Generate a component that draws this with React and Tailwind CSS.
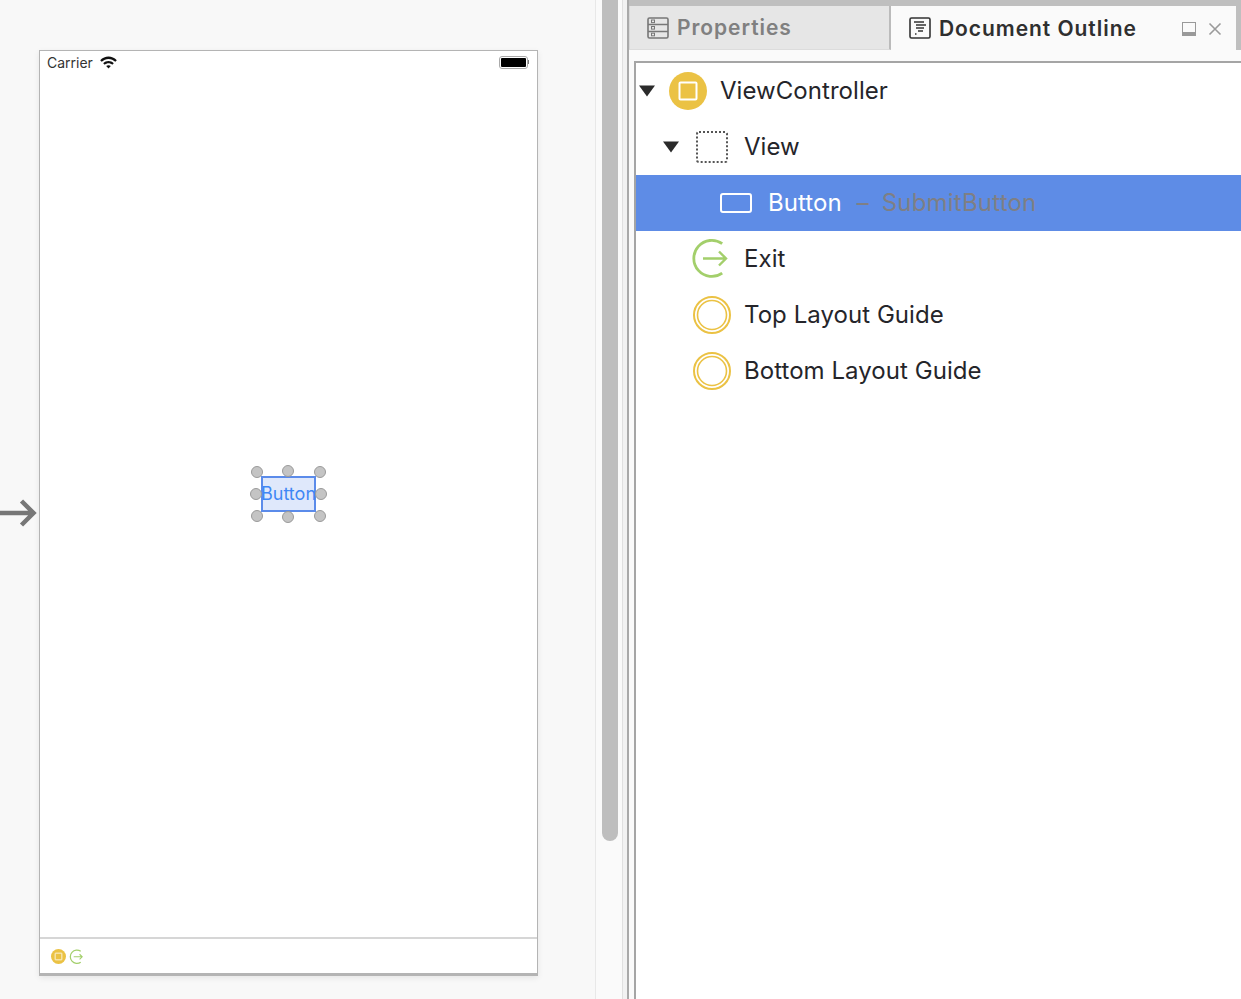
import React from 'react';

const TriangleDown = () => (
  <svg width="16" height="12" viewBox="0 0 16 12" className="shrink-0">
    <path d="M0 0.5H16L8 11.5Z" fill="#2b2b2b" />
  </svg>
);

const ControllerIcon = ({ size = 38 }) => (
  <svg width={size} height={size} viewBox="0 0 38 38" className="shrink-0">
    <circle cx="19" cy="19" r="19" fill="#ebc244" />
    <rect x="10.5" y="10.5" width="17" height="17" rx="1" fill="none" stroke="#fff" strokeWidth="2" />
  </svg>
);

const ExitIcon = ({ size = 38, stroke = 2.8, arrow = 2.4 }) => (
  <svg width={size} height={size} viewBox="0 0 38 38" fill="none" className="shrink-0 overflow-visible">
    <path d="M29.2 3.7A18 18 0 1 0 29.2 33.1" stroke="#a3cf6b" strokeWidth={stroke} />
    <path d="M10 18.5H33M26 11.5L33 18.5L26 25.5" stroke="#a3cf6b" strokeWidth={arrow} />
  </svg>
);

const GuideIcon = () => (
  <svg width="38" height="38" viewBox="0 0 38 38" fill="none" className="shrink-0">
    <circle cx="19" cy="19" r="18" stroke="#ebc244" strokeWidth="2" />
    <circle cx="19" cy="19" r="14.5" stroke="#ebc244" strokeWidth="1.6" />
  </svg>
);

const PropertiesIcon = () => (
  <svg width="22" height="22" viewBox="0 0 22 22" fill="none" className="shrink-0">
    <rect x="1" y="1" width="20" height="20" rx="1.5" stroke="#777" strokeWidth="1.6" />
    <path d="M1 7.5H21M1 14.5H21" stroke="#777" strokeWidth="1.4" />
    <rect x="4.5" y="3" width="3" height="2.6" stroke="#777" />
    <rect x="4.5" y="9.5" width="3" height="2.6" stroke="#777" />
    <rect x="4.5" y="16.2" width="3" height="2.6" stroke="#777" />
  </svg>
);

const OutlineIcon = () => (
  <svg width="22" height="22" viewBox="0 0 22 22" fill="none" className="shrink-0">
    <rect x="1" y="1" width="20" height="20" rx="1.5" stroke="#333" strokeWidth="1.6" />
    <path d="M5 5H15M7 8H17M7 11H15M9 14H14M6 17H7.5" stroke="#333" strokeWidth="1.3" />
  </svg>
);

const WifiIcon = () => (
  <svg width="17" height="13" viewBox="0 0 17 13" className="shrink-0">
    <path d="M0.2 4.2C4.8 -0.6 12.2 -0.6 16.8 4.2L15.3 5.8C11.5 1.9 5.5 1.9 1.7 5.8Z" fill="#111" />
    <path d="M3.2 7.2C6 4.3 11 4.3 13.8 7.2L12.2 8.8C10.2 6.8 6.8 6.8 4.8 8.8Z" fill="#111" />
    <path d="M6.2 10.1C7.4 9 9.6 9 10.8 10.1L8.5 12.6Z" fill="#111" />
  </svg>
);

const Handle = ({ className }) => (
  <span className={`absolute w-3 h-3 rounded-full bg-[#c4c4c4] border border-[#9a9a9a] ${className}`} />
);

const SelectedButton = () => (
  <div className="relative w-[55px] h-[36px] border-2 border-[#5b8bea] bg-[#dfe8fb] flex items-center justify-center">
    <span className="text-[18px] leading-none mt-[1px] text-[#3f87f5] whitespace-nowrap">Button</span>
    <Handle className="left-[-12px] top-[-12px]" />
    <Handle className="left-[19px] top-[-13px]" />
    <Handle className="left-[51px] top-[-12px]" />
    <Handle className="left-[-13px] top-[10px]" />
    <Handle className="left-[52px] top-[10px]" />
    <Handle className="left-[-12px] top-[32px]" />
    <Handle className="left-[19px] top-[33px]" />
    <Handle className="left-[51px] top-[32px]" />
  </div>
);

const Phone = () => (
  <div className="w-[499px] h-[926px] bg-white border border-[#b4b4b4] border-b-[3px] flex flex-col shadow-[0_2px_6px_rgba(0,0,0,0.08)]">
    <div className="h-[21px] flex items-center pl-[7px] pr-[8px] pt-[3px] shrink-0">
      <span className="text-[14px] leading-none text-[#333]">Carrier</span>
      <span className="ml-[7px] -mt-[1px]"><WifiIcon /></span>
      <div className="ml-auto flex items-center -mt-[2px]">
        <div className="w-[29px] h-[13px] rounded-[3px] border border-[#aaa] p-[1px] bg-white">
          <div className="w-full h-full bg-black rounded-[1px]" />
        </div>
        <div className="w-[1px] h-[4px] bg-[#777]" />
      </div>
    </div>
    <div className="flex-1 flex items-center justify-center pb-[22px]">
      <SelectedButton />
    </div>
    <div className="h-[36px] shrink-0 border-t-2 border-[#d6d6d6] flex items-center pl-[11px] pt-[1px] gap-[4px]">
      <ControllerIcon size={15} />
      <ExitIcon size={14} stroke={3.4} arrow={3} />
    </div>
  </div>
);

const Row = ({ indent, caret, selected, children }) => (
  <div
    className={`h-[56px] flex items-center text-[24px] tracking-[0.05px] ${
      selected ? 'bg-[#5e8ce6] text-white' : 'text-[#25252a]'
    }`}
    style={{ paddingLeft: indent }}
  >
    <div className="w-[16px] mr-[16px] shrink-0">{caret && <TriangleDown />}</div>
    {children}
  </div>
);

export default function App() {
  return (
    <div className="w-[1241px] h-[999px] overflow-hidden flex bg-[#f8f8f8] font-['Inter','Liberation_Sans',sans-serif]">
      {/* storyboard canvas */}
      <div className="w-[595px] shrink-0 pt-[50px] flex items-start">
        <div className="flex items-center">
          <div className="w-[39px] h-[926px] flex items-center">
            <svg width="39" height="30" viewBox="0 0 39 30" fill="none">
              <path d="M0 15H33M21.5 3L33.5 15L21.5 27" stroke="#777" strokeWidth="4.5" />
            </svg>
          </div>
          <Phone />
        </div>
      </div>

      {/* scroller */}
      <div className="w-[28px] shrink-0 border-l border-[#e8e8e8] bg-[#fafafa] pl-[6px] border-r border-r-[#e0e0e0]">
        <div className="w-[16px] h-[841px] bg-[#bebebe] rounded-b-[8px]" />
      </div>
      <div className="w-[6px] shrink-0 bg-[#f2f2f2] border-r-2 border-[#a9a9a9]" />

      {/* outline panel */}
      <div className="w-[612px] shrink-0 flex flex-col bg-[#fafafa]">
        <div className="h-[6px] bg-[#bfbfbf] shrink-0" />
        <div className="h-[44px] shrink-0 flex">
          <div className="w-[262px] pl-[17px] flex items-center gap-[8px] bg-[#e6e6e6] border-r-2 border-[#bbb] border-b border-b-[#dcdcdc] border-l border-l-[#d8d8d8]">
            <PropertiesIcon />
            <span className="text-[21px] mt-[1px] font-semibold text-[#808080] tracking-[0.95px]">Properties</span>
          </div>
          <div className="w-[345px] pl-[18px] flex items-center gap-[8px] bg-[#fafafa]">
            <OutlineIcon />
            <span className="text-[21px] mt-[1px] font-semibold text-[#2f2f2f] tracking-[0.95px]">Document Outline</span>
            <div className="ml-auto flex items-center gap-[12px] pr-[14px]">
              <div className="w-[14px] h-[14px] border border-[#999] border-b-[4px] mt-[2px]" />
              <svg width="14" height="14" viewBox="0 0 14 14" fill="none" className="mt-[1px]">
                <path d="M1.5 1.5L12.5 12.5M12.5 1.5L1.5 12.5" stroke="#9a9a9a" strokeWidth="1.6" />
              </svg>
            </div>
          </div>
          <div className="w-[5px] bg-[#bfbfbf]" />
        </div>
        <div className="h-[11px] shrink-0" />
        <div className="flex-1 ml-[5px] bg-white border-l-2 border-t-2 border-[#a5a5a5]">
          <Row indent={3} caret>
            <span className="-ml-[2px] mr-[13px]"><ControllerIcon /></span>
            ViewController
          </Row>
          <Row indent={27} caret>
            <div className="w-[32px] h-[32px] border-2 border-dotted border-[#555] rounded-[3px] shrink-0 mr-[16px] ml-[1px]" />
            View
          </Row>
          <Row indent={51} selected>
            <div className="w-[32px] h-[20px] border-2 border-white rounded-[3px] shrink-0 mr-[16px] ml-[1px]" />
            Button
            <span className="ml-[15px] text-[#7f7f84]">–</span>
            <span className="ml-[13px] text-[#7f7f84] tracking-[0.2px]">SubmitButton</span>
          </Row>
          <Row indent={25}>
            <span className="mr-[13px]"><ExitIcon /></span>
            Exit
          </Row>
          <Row indent={25}>
            <span className="mr-[13px]"><GuideIcon /></span>
            Top Layout Guide
          </Row>
          <Row indent={25}>
            <span className="mr-[13px]"><GuideIcon /></span>
            Bottom Layout Guide
          </Row>
        </div>
      </div>
    </div>
  );
}
